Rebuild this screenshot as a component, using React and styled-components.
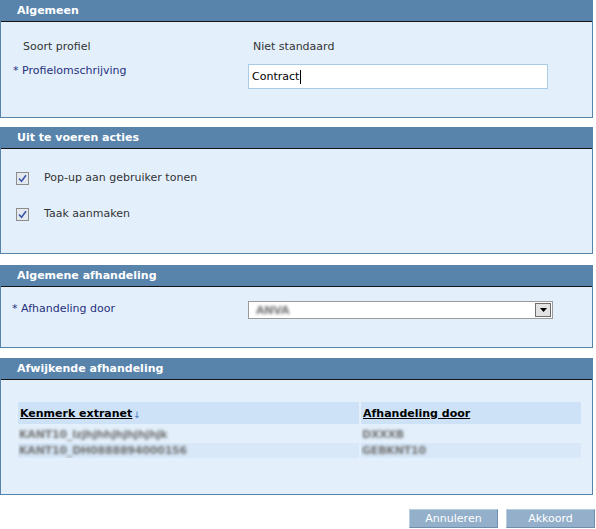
import React from "react";
import styled, { createGlobalStyle } from "styled-components";

const Global = createGlobalStyle`
  html, body { margin: 0; padding: 0; background: #fff; }
  body { font-family: "DejaVu Sans", Verdana, sans-serif; font-size: 11px; color: #333; }
`;

const Page = styled.div`
  width: 596px;
`;

const Panel = styled.section`
  width: 593px;
  box-sizing: border-box;
  border: 1px solid #5883ab;
  margin-bottom: ${(p) => p.$mb}px;
`;

const PanelHeader = styled.div`
  height: 20px;
  background: #5883ab;
  border-bottom: 1px solid #141414;
  color: #fff;
  font-weight: bold;
  font-size: 11px;
  line-height: 20px;
  padding-left: 16px;
`;

const PanelBody = styled.div`
  background: #e3f0fc;
  height: ${(p) => p.$h}px;
  box-sizing: border-box;
  padding: ${(p) => p.$pad};
`;

const FormRow = styled.div`
  display: flex;
  align-items: flex-start;
  margin-top: ${(p) => p.$mt || 0}px;
`;

const Label = styled.div`
  width: ${(p) => p.$w || 235}px;
  line-height: 16px;
  padding-left: ${(p) => (p.$indent ? 10 : 0)}px;
  box-sizing: border-box;
  color: ${(p) => (p.$required ? "#27307d" : "#333")};
`;

const Value = styled.div`
  line-height: 16px;
  padding-left: 5px;
  color: #333;
`;

const TextField = styled.div`
  margin-top: 1px;
  width: 300px;
  height: 25px;
  box-sizing: border-box;
  border: 1px solid #a9cbe6;
  background: #fff;
  display: flex;
  align-items: center;
  padding-left: 3px;
  color: #000;
  font-size: 11px;
`;

const Caret = styled.span`
  display: inline-block;
  width: 1px;
  height: 14px;
  background: #000;
  margin-left: 1px;
`;

const CheckRow = styled.div`
  display: flex;
  align-items: center;
  height: 16px;
  margin-top: ${(p) => p.$mt || 0}px;
`;

const CheckBox = styled.span`
  width: 13px;
  height: 13px;
  box-sizing: border-box;
  border: 1px solid #8c8c8c;
  background: #e4e9f0;
  display: inline-flex;
  align-items: center;
  justify-content: center;
  margin-right: 15px;
`;

const CheckText = styled.span`
  color: #333;
  line-height: 16px;
`;

const Select = styled.div`
  width: 305px;
  height: 18px;
  box-sizing: border-box;
  border: 1px solid #9a9a9a;
  background: #fff;
  display: flex;
  align-items: center;
  justify-content: space-between;
`;

const Blur = styled.span`
  display: inline-block;
  color: #707070;
  filter: blur(1.4px);
  margin-left: ${(p) => p.$pl || 0}px;
  font-size: 11px;
  font-weight: bold;
  letter-spacing: -0.2px;
`;

const DropButton = styled.span`
  width: 16px;
  height: 14px;
  box-sizing: border-box;
  border: 1px solid #6e6e6e;
  background: #e2e2e2;
  display: flex;
  align-items: center;
  justify-content: center;
  margin-right: 1px;
`;

const Grid = styled.div`
  display: grid;
  width: 563px;
  grid-template-columns: 341px 220px;
  grid-template-rows: 22px 19px 15px;
  column-gap: 2px;
`;

const HeadCell = styled.div`
  background: #cde2f6;
  display: flex;
  align-items: center;
  padding-left: 2px;
  font-weight: bold;
  color: #000;
`;

const HeadLink = styled.span`
  text-decoration: underline;
`;

const SortArrow = styled.span`
  color: #4a78c0;
  font-weight: normal;
  font-size: 9px;
  margin-left: 1px;
  margin-top: 3px;
`;

const Cell = styled.div`
  background: ${(p) => (p.$alt ? "#d8e8f8" : "transparent")};
  display: flex;
  align-items: ${(p) => (p.$alt ? "center" : "flex-end")};
  padding-left: 1px;
  padding-bottom: ${(p) => (p.$alt ? 0 : 2)}px;
  box-sizing: border-box;
  overflow: hidden;
  white-space: nowrap;
`;

const Footer = styled.div`
  display: flex;
  justify-content: flex-end;
  gap: 8px;
  padding-right: 1px;
`;

const Button = styled.button`
  width: 89px;
  height: 19px;
  box-sizing: border-box;
  background: #93afc9;
  border: 1px solid;
  border-color: #b9cde0 #6f8fae #6f8fae #b9cde0;
  color: #fff;
  font-family: "DejaVu Sans", Verdana, sans-serif;
  font-size: 11px;
  padding: 0;
  line-height: 17px;
`;

const Check = () => (
  <CheckBox>
    <svg width="9" height="9" viewBox="0 0 9 9">
      <path d="M1 4.5 L3.5 7.2 L8 1.2" stroke="#3c55a8" strokeWidth="1.6" fill="none" />
    </svg>
  </CheckBox>
);

export default function App() {
  return (
    <Page>
      <Global />
      <Panel $mb={9}>
        <PanelHeader>Algemeen</PanelHeader>
        <PanelBody $h={95} $pad="17px 0 0 12px">
          <FormRow>
            <Label $indent>Soort profiel</Label>
            <Value>Niet standaard</Value>
          </FormRow>
          <FormRow $mt={8}>
            <Label $required>* Profielomschrijving</Label>
            <TextField>
              Contract
              <Caret />
            </TextField>
          </FormRow>
        </PanelBody>
      </Panel>

      <Panel $mb={11}>
        <PanelHeader>Uit te voeren acties</PanelHeader>
        <PanelBody $h={104} $pad="21px 0 0 15px">
          <CheckRow>
            <Check />
            <CheckText>Pop-up aan gebruiker tonen</CheckText>
          </CheckRow>
          <CheckRow $mt={20}>
            <Check />
            <CheckText>Taak aanmaken</CheckText>
          </CheckRow>
        </PanelBody>
      </Panel>

      <Panel $mb={10}>
        <PanelHeader>Algemene afhandeling</PanelHeader>
        <PanelBody $h={60} $pad="14px 0 0 11px">
          <FormRow>
            <Label $required $w={236}>* Afhandeling door</Label>
            <Select>
              <Blur $pl={7}>ANVA</Blur>
              <DropButton>
                <svg width="7" height="4" viewBox="0 0 7 4">
                  <path d="M0 0 H7 L3.5 4 Z" fill="#000" />
                </svg>
              </DropButton>
            </Select>
          </FormRow>
        </PanelBody>
      </Panel>

      <Panel $mb={14}>
        <PanelHeader>Afwijkende afhandeling</PanelHeader>
        <PanelBody $h={114} $pad="22px 0 0 17px">
          <Grid>
            <HeadCell>
              <HeadLink>Kenmerk extranet</HeadLink>
              <SortArrow>↓</SortArrow>
            </HeadCell>
            <HeadCell>
              <HeadLink>Afhandeling door</HeadLink>
            </HeadCell>
            <Cell>
              <Blur>KANT10_lzjhjhhjhjhjhjhjk</Blur>
            </Cell>
            <Cell>
              <Blur>DXXXB</Blur>
            </Cell>
            <Cell $alt>
              <Blur>KANT10_DH0888894000156</Blur>
            </Cell>
            <Cell $alt>
              <Blur>GEBKNT10</Blur>
            </Cell>
          </Grid>
        </PanelBody>
      </Panel>

      <Footer>
        <Button>Annuleren</Button>
        <Button>Akkoord</Button>
      </Footer>
    </Page>
  );
}
